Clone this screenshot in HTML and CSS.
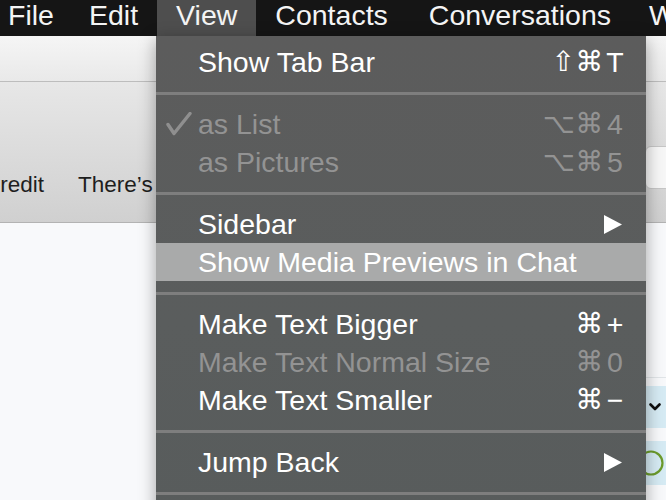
FILE: index.html
```html
<!DOCTYPE html>
<html>
<head>
<meta charset="utf-8">
<link rel="stylesheet" href="styles.css">
</head>
<body>
<div class="menubar">
  <span class="mb-item first">File</span>
  <span class="mb-item">Edit</span>
  <span class="mb-item active">View</span>
  <span class="mb-item wide">Contacts</span>
  <span class="mb-item">Conversations</span>
  <span class="mb-item">Window</span>
</div>
<div class="window">
  <div class="toolbar-top"></div>
  <div class="toolbar-main">
    <div class="tabs">
      <span class="tab cut">Credit</span>
      <span class="tab">There’s</span>
    </div>
    <div class="search"></div>
  </div>
  <div class="content">
    <div class="list">
      <div class="list-line"></div>
      <div class="row">
        <svg class="chev" width="12" height="8" viewBox="0 0 12 8"><path d="M1.5 1.5 L6 6 L10.5 1.5" fill="none" stroke="#111" stroke-width="2.6" stroke-linecap="round" stroke-linejoin="round"/></svg>
      </div>
      <div class="row tall">
        <svg class="ring" width="28" height="28" viewBox="0 0 28 28"><circle cx="14" cy="14" r="11.5" fill="none" stroke="#6c9b2c" stroke-width="2.2"/></svg>
      </div>
    </div>
  </div>
</div>

<div class="menu">
  <div class="item"><span class="gutter"></span><span class="label">Show Tab Bar</span><span class="sc"><span class="mods">⇧⌘</span><span class="key">T</span></span></div>
  <div class="sep"></div>
  <div class="item disabled"><span class="gutter"><svg width="26" height="24" viewBox="0 0 26 24"><path d="M2 12.5 L8 21.5 L24 1.5" fill="none" stroke="#8f8f8f" stroke-width="3.4" stroke-linecap="round" stroke-linejoin="round"/></svg></span><span class="label">as List</span><span class="sc"><span class="mods">⌥⌘</span><span class="key">4</span></span></div>
  <div class="item disabled"><span class="gutter"></span><span class="label">as Pictures</span><span class="sc"><span class="mods">⌥⌘</span><span class="key">5</span></span></div>
  <div class="sep"></div>
  <div class="item"><span class="gutter"></span><span class="label">Sidebar</span><svg class="arrow" width="18" height="19" viewBox="0 0 18 19"><polygon points="0,0 18,9.5 0,19" fill="#fff"/></svg></div>
  <div class="item hl"><span class="gutter"></span><span class="label">Show Media Previews in Chat</span></div>
  <div class="sep"></div>
  <div class="item"><span class="gutter"></span><span class="label">Make Text Bigger</span><span class="sc"><span class="mods">⌘</span><span class="key">+</span></span></div>
  <div class="item disabled"><span class="gutter"></span><span class="label">Make Text Normal Size</span><span class="sc"><span class="mods">⌘</span><span class="key">0</span></span></div>
  <div class="item"><span class="gutter"></span><span class="label">Make Text Smaller</span><span class="sc"><span class="mods">⌘</span><span class="key">−</span></span></div>
  <div class="sep"></div>
  <div class="item"><span class="gutter"></span><span class="label">Jump Back</span><svg class="arrow" width="18" height="19" viewBox="0 0 18 19"><polygon points="0,0 18,9.5 0,19" fill="#fff"/></svg></div>
  <div class="sep"></div>
</div>
</body>
</html>
```

FILE: styles.css
```css
html, body {
  margin: 0;
  padding: 0;
}
body {
  width: 666px;
  height: 500px;
  overflow: hidden;
  position: relative;
  font-family: "Liberation Sans", Arial, "DejaVu Sans", sans-serif;
  background: #f8f9fb;
}

/* Menu bar */
.menubar {
  height: 36px;
  background: #151515;
  display: flex;
  white-space: nowrap;
  overflow: hidden;
}
.mb-item {
  height: 36px;
  line-height: 30px;
  font-size: 28.5px;
  color: #f4f4f4;
  padding: 0 19px;
  flex: none;
}
.mb-item.first {
  padding-left: 8px;
  padding-right: 16px;
}
.mb-item.wide {
  padding-right: 22px;
}
.mb-item.active {
  background: #4e4e4e;
}

/* Window background */
.window {
  display: flex;
  flex-direction: column;
  height: 464px;
}
.toolbar-top {
  height: 45px;
  background: linear-gradient(#f5f5f5, #e9e9e9);
  border-bottom: 1px solid #bdbdbd;
  flex: none;
}
.toolbar-main {
  height: 140px;
  flex: none;
  background: linear-gradient(#e7e7e7, #d0d0d0);
  border-bottom: 1px solid #b3b3b3;
  display: flex;
  align-items: flex-start;
}
.tabs {
  margin-top: 90px;
  display: flex;
  gap: 34px;
  font-size: 22.5px;
  line-height: 26px;
  color: #1e1e1e;
  white-space: nowrap;
  flex: 1;
}
.tab.cut {
  margin-left: -16px;
}
.search {
  margin-top: 64px;
  width: 30px;
  height: 41px;
  margin-right: -11px;
  background: #f7f7f7;
  border: 1px solid #c6c6c6;
  border-radius: 6px;
  flex: none;
}
.content {
  flex: 1;
  background: #f8f9fb;
  padding-top: 154px;
}
.list {
  margin-left: 430px;
  display: flex;
  flex-direction: column;
}
.list-line {
  height: 1px;
  background: #e1e5e8;
  margin-bottom: 8px;
}
.row {
  height: 42px;
  background: #d6ebf4;
  display: flex;
  align-items: center;
  justify-content: flex-end;
  padding-right: 5px;
}
.row.tall {
  height: 44px;
  margin-top: 13px;
  padding-right: 1px;
}

/* Dropdown menu */
.menu {
  position: absolute;
  top: 36px;
  left: 156px;
  width: 490px;
  height: 480px;
  padding-top: 7px;
  box-sizing: border-box;
  background: linear-gradient(#5c5c5c, #5a5d5d 60%, #585c5c);
  box-shadow: 0 4px 16px rgba(0, 0, 0, 0.35);
  color: #ffffff;
  font-size: 28.5px;
}
.item {
  height: 38px;
  line-height: 38px;
  display: flex;
  align-items: center;
  padding: 0 20px 0 10px;
  white-space: nowrap;
}
.item.hl {
  background: #a9aaaa;
}
.item.disabled {
  color: #939393;
}
.gutter {
  width: 32px;
  flex: none;
  display: flex;
  align-items: center;
}
.label {
  flex: 1;
}
.sc {
  display: flex;
  align-items: center;
}
.mods {
  font-family: "DejaVu Sans", sans-serif;
  font-size: 28px;
  letter-spacing: 0.5px;
}
.key {
  width: 22px;
  text-align: center;
}
.arrow {
  margin-right: 4px;
  flex: none;
}
.sep {
  height: 3px;
  margin: 11px 0 10px;
  background: #7e7e7e;
}
```
